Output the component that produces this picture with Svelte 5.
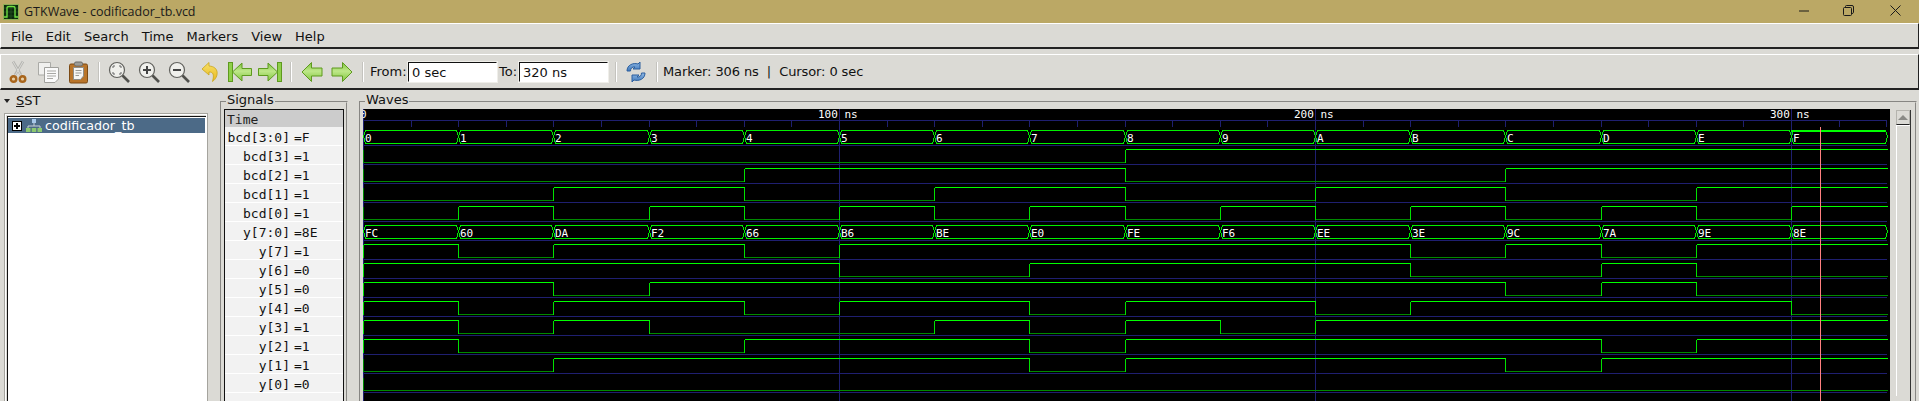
<script>
    const menus = ["File", "Edit", "Search", "Time", "Markers", "View", "Help"];
    const bcd = "0123456789ABCDEF".split("");
    const ys = ["FC", "60", "DA", "F2", "66", "B6", "BE", "E0", "FE", "F6", "EE", "3E", "9C", "7A", "9E", "8E"];

    const signals = [
        { name: "bcd[3:0]", value: "F" },
        { name: "bcd[3]", value: "1" },
        { name: "bcd[2]", value: "1" },
        { name: "bcd[1]", value: "1" },
        { name: "bcd[0]", value: "1" },
        { name: "y[7:0]", value: "8E" },
        { name: "y[7]", value: "1" },
        { name: "y[6]", value: "0" },
        { name: "y[5]", value: "0" },
        { name: "y[4]", value: "0" },
        { name: "y[3]", value: "1" },
        { name: "y[2]", value: "1" },
        { name: "y[1]", value: "1" },
        { name: "y[0]", value: "0" },
    ];

    const END = 1524;
    const tx = (i) => (i >= 16 ? END : Math.floor(95.2 * i + 0.4));
    // row n has its blue line at this y, inside the canvas
    const rowLine = (n) => 36 + 19 * n;

    function bits(list, bit) {
        return list.map((v) => (parseInt(v, 16) >> bit) & 1);
    }

    function digital(values, n) {
        const hi = rowLine(n) - 15 + 0.5;
        const lo = rowLine(n) - 2 + 0.5;
        const high = [];
        const low = [];
        const edges = [];
        values.forEach((v, i) => {
            const a = tx(i) + 0.5;
            const b = tx(i + 1) + 0.5;
            (v ? high : low).push(`M${a} ${v ? hi : lo}H${b}`);
            if (i > 0 && values[i - 1] !== v) edges.push(`M${a} ${hi}V${lo}`);
        });
        return {
            high: high.join(""),
            low: low.join(""),
            edges: edges.join(""),
            start: `M0.5 ${hi}V${lo}`,
            startColor: values[0] ? "#00e000" : "#008a00",
        };
    }

    function bus(labels, n) {
        const top = rowLine(n) - 15 + 0.5;
        const bot = rowLine(n) - 2 + 0.5;
        const mid = rowLine(n) - 8.5;
        let d = "";
        labels.forEach((_, i) => {
            const a = tx(i);
            const b = tx(i + 1);
            d += `M${a + 0.5} ${mid}L${a + 2.5} ${top}H${b - 1.5}L${b + 0.5} ${mid}L${b - 1.5} ${bot}H${a + 2.5}Z`;
        });
        return { d, top, texts: labels.map((t, i) => ({ t, x: tx(i) + 2, y: rowLine(n) - 3 })) };
    }

    const buses = [bus(bcd, 0), bus(ys, 5)];
    const wires = [];
    [3, 2, 1, 0].forEach((b, k) => wires.push(digital(bits(bcd, b), k + 1)));
    [7, 6, 5, 4, 3, 2, 1, 0].forEach((b, k) => wires.push(digital(bits(ys, b), k + 6)));

    const ticks = Array.from({ length: 33 }, (_, i) => Math.round(47.6 * i));
    const majors = [
        { x: 0, label: "0" },
        { x: 476, label: "100 ns" },
        { x: 952, label: "200 ns" },
        { x: 1428, label: "300 ns" },
    ];
</script>

<div class="window">
    <header class="titlebar">
        <svg class="appicon" width="16" height="16" viewBox="0 0 16 16">
            <rect x="0.5" y="0.5" width="15" height="15" fill="#0c2a0c" stroke="#8fae55" />
            <path d="M1 4H15M1 8H15M1 12H15M4 1V15M8 1V15M12 1V15" stroke="#2c5a2c" stroke-width="0.6" />
            <path d="M1 13H4V4Q4 2.5 6 2.5H10Q12 2.5 12 4V13H15" fill="none" stroke="#6fe040" stroke-width="1.3" />
        </svg>
        <span class="title">GTKWave - codificador_tb.vcd</span>
        <div class="controls">
            <svg class="min" width="11" height="2" viewBox="0 0 11 2"><path d="M0 1H10" stroke="#1a1a1a" /></svg>
            <svg width="11" height="11" viewBox="0 0 11 11" fill="none" stroke="#1a1a1a">
                <rect x="0.5" y="2.5" width="8" height="8" rx="1" />
                <path d="M2.5 2.5V1.5Q2.5 0.5 3.5 0.5H9Q10.5 0.5 10.5 2V7.5Q10.5 8.5 8.5 8.5" />
            </svg>
            <svg width="11" height="11" viewBox="0 0 11 11"><path d="M0.5 0.5L10.5 10.5M10.5 0.5L0.5 10.5" stroke="#1a1a1a" /></svg>
        </div>
    </header>

    <nav class="menubar">
        {#each menus as m}
            <span class="menu">{m}</span>
        {/each}
    </nav>

    <div class="toolbar">
        <svg class="defs" width="0" height="0">
            <defs>
                <linearGradient id="gloss" x1="0" y1="0" x2="0" y2="1">
                    <stop offset="0" stop-color="#7cc23a" />
                    <stop offset="0.45" stop-color="#bfe88a" />
                    <stop offset="1" stop-color="#7fc63c" />
                </linearGradient>
                <linearGradient id="sunny" x1="0" y1="0" x2="0" y2="1">
                    <stop offset="0" stop-color="#f7e06a" />
                    <stop offset="1" stop-color="#e8b81c" />
                </linearGradient>
                <linearGradient id="sky" x1="0" y1="0" x2="0" y2="1">
                    <stop offset="0" stop-color="#8fb8e4" />
                    <stop offset="1" stop-color="#3f78bb" />
                </linearGradient>
            </defs>
        </svg>
        <span class="tool">
            <svg width="24" height="24" viewBox="0 0 24 24">
                <path d="M7 1.5L15 15M17 1.5L9 15" stroke="#b4b4b0" stroke-width="2.6" fill="none" />
                <path d="M7 1.5L14.6 15M17 1.5L9.4 15" stroke="#e6e6e2" stroke-width="0.8" fill="none" />
                <circle cx="7.5" cy="19" r="2.8" fill="#e8d0a8" stroke="#a8651c" stroke-width="2.4" />
                <circle cx="16.5" cy="19" r="2.8" fill="#e8d0a8" stroke="#a8651c" stroke-width="2.4" />
            </svg>
        </span>
        <span class="tool">
            <svg width="24" height="24" viewBox="0 0 24 24">
                <path d="M2.5 2.5H14.5V15H2.5Z" fill="#f0f0ee" stroke="#aaaaa6" />
                <path d="M8.5 7.5H22.5V19L19 22.5H8.5Z" fill="#fafafa" stroke="#a0a09c" />
                <path d="M11 11H20M11 13.5H20M11 16H20M11 18.5H17" stroke="#a8a8a4" />
            </svg>
        </span>
        <span class="tool">
            <svg width="24" height="24" viewBox="0 0 24 24">
                <rect x="3.5" y="4" width="18" height="19" rx="1.5" fill="#b9752a" stroke="#7c4a14" />
                <path d="M7.5 7.5H17.5V16L14.5 19.5H7.5Z" fill="#f6f6f4" stroke="#8e8e8a" />
                <path d="M9.5 10.5H15.5M9.5 13H15.5M9.5 15.5H13" stroke="#9a9a96" />
                <rect x="8.5" y="2" width="8" height="4" rx="1.5" fill="#9c9c98" stroke="#6c6c68" />
            </svg>
        </span>
        <span class="sep"></span>
        <span class="tool">
            <svg width="24" height="24" viewBox="0 0 24 24">
                <circle cx="10" cy="10" r="7.5" fill="#f0f0ec" stroke="#62625e" stroke-width="1.2" />
                <path d="M15.5 15.5L22 22" stroke="#50504c" stroke-width="2.6" />
                <path d="M6 8V6H8M12 6H14V8M14 12V14H12M8 14H6V12" fill="none" stroke="#666" stroke-width="1" />
            </svg>
        </span>
        <span class="tool">
            <svg width="24" height="24" viewBox="0 0 24 24">
                <circle cx="10" cy="10" r="7.5" fill="#f0f0ec" stroke="#62625e" stroke-width="1.2" />
                <path d="M15.5 15.5L22 22" stroke="#50504c" stroke-width="2.6" />
                <path d="M6 10H14M10 6V14" stroke="#444" stroke-width="2" />
            </svg>
        </span>
        <span class="tool">
            <svg width="24" height="24" viewBox="0 0 24 24">
                <circle cx="10" cy="10" r="7.5" fill="#f0f0ec" stroke="#62625e" stroke-width="1.2" />
                <path d="M15.5 15.5L22 22" stroke="#50504c" stroke-width="2.6" />
                <path d="M6 10H14" stroke="#444" stroke-width="2" />
            </svg>
        </span>
        <span class="tool undo">
            <svg width="24" height="24" viewBox="0 0 24 24">
                <path d="M11 2.5L4 9L11 15V12C15 12 16.5 14 14.5 21.5C21 17 21.5 6.5 11 6Z" fill="url(#sunny)" stroke="#c9a418" stroke-width="0.8" />
            </svg>
        </span>
        <span class="tool">
            <svg width="26" height="24" viewBox="0 0 26 24">
                <rect x="1.5" y="2.5" width="4" height="19" fill="#8fd04a" stroke="#5e9a1e" />
                <path d="M5.5 12L15 3V8.5H24.5V15.5H15V21Z" fill="url(#gloss)" stroke="#5e9a1e" />
            </svg>
        </span>
        <span class="tool">
            <svg width="26" height="24" viewBox="0 0 26 24">
                <rect x="20.5" y="2.5" width="4" height="19" fill="#8fd04a" stroke="#5e9a1e" />
                <path d="M20.5 12L11 3V8.5H1.5V15.5H11V21Z" fill="url(#gloss)" stroke="#5e9a1e" />
            </svg>
        </span>
        <span class="sep last"></span>
        <span class="tool">
            <svg width="24" height="24" viewBox="0 0 24 24">
                <path d="M2 12L11.5 2.5V8H22V16H11.5V21.5Z" fill="url(#gloss)" stroke="#5e9a1e" />
            </svg>
        </span>
        <span class="tool">
            <svg width="24" height="24" viewBox="0 0 24 24">
                <path d="M22 12L12.5 2.5V8H2V16H12.5V21.5Z" fill="url(#gloss)" stroke="#5e9a1e" />
            </svg>
        </span>
        <span class="sep last"></span>
        <span class="from">From:</span>
        <span class="field">0 sec</span>
        <span class="to">To:</span>
        <span class="field">320 ns</span>
        <span class="sep after"></span>
        <span class="refresh">
            <svg width="22" height="22" viewBox="0 0 22 22">
                <path d="M2 10C2 4 8 1.5 13 3L15 1V8H8L10 6C7 5.5 5.5 7.5 5.5 10Z" fill="url(#sky)" stroke="#2c5f9e" />
                <path d="M20 12C20 18 14 20.5 9 19L7 21V14H14L12 16C15 16.5 16.5 14.5 16.5 12Z" fill="url(#sky)" stroke="#2c5f9e" />
            </svg>
        </span>
        <span class="sep"></span>
        <span class="status">Marker: 306 ns &nbsp;|&nbsp; Cursor: 0 sec</span>
    </div>

    <main class="panes">
        <section class="sst">
            <div class="sst-head">
                <span class="arrow"></span>
                <span><u>S</u>ST</span>
            </div>
            <div class="tree-frame">
                <div class="tree">
                    <div class="tree-row">
                        <span class="plus"></span>
                        <svg class="hier" width="16" height="13" viewBox="0 0 16 13">
                            <rect x="6" y="0" width="4" height="4" fill="#a8c8ea" />
                            <path d="M8 4V7M2 9V7H14V9" fill="none" stroke="#c8d0d8" />
                            <rect x="0" y="9" width="4.5" height="4" fill="#8cc870" />
                            <rect x="5.75" y="9" width="4.5" height="4" fill="#8cc870" />
                            <rect x="11.5" y="9" width="4.5" height="4" fill="#8cc870" />
                        </svg>
                        <span class="tree-label">codificador_tb</span>
                    </div>
                </div>
            </div>
        </section>

        <fieldset class="signals">
            <legend>Signals</legend>
            <div class="siglist">
                <div class="sig-time">Time</div>
                {#each signals as s}
                    <div class="sig">
                        <span class="sig-name">{s.name}</span>
                        <span class="sig-value">={s.value}</span>
                    </div>
                {/each}
            </div>
        </fieldset>

        <fieldset class="waves">
            <legend>Waves</legend>
            <div class="waves-body">
                <svg class="canvas" width="1527" height="292" viewBox="0 0 1527 292">
                    <rect width="1527" height="292" fill="#000" />
                    <g shape-rendering="crispEdges" stroke="#1f1f70" fill="none">
                        <path d="M0 11.5H1524" />
                        {#each ticks as t}
                            <path d={`M${t + 0.5} 11V18`} />
                        {/each}
                        {#each majors as m}
                            <path d={`M${m.x + 0.5} 0V292`} />
                        {/each}
                        {#each signals as _, n}
                            <path d={`M0 ${rowLine(n) + 0.5}H1524`} />
                        {/each}
                    </g>
                    {#each majors as m}
                        <text class="ruler" x={m.x === 0 ? -3 : m.x - 21} y="9">{m.label}</text>
                    {/each}
                    <g fill="none" shape-rendering="crispEdges">
                        {#each wires as w}
                            <path d={w.low} stroke="#008a00" />
                            <path d={w.high} stroke="#00ff00" />
                            <path d={w.edges} stroke="#00e000" />
                            <path d={w.start} stroke={w.startColor} />
                        {/each}
                    </g>
                    <g fill="none" stroke="#00f000" shape-rendering="crispEdges">
                        {#each buses as b}
                            <path d={b.d} />
                        {/each}
                    </g>
                    <path d={`M${tx(15)} 22H${END - 2}`} stroke="#00ff00" stroke-width="2" shape-rendering="crispEdges" />
                    {#each buses as b}
                        {#each b.texts as t}
                            <text class="value" x={t.x} y={t.y}>{t.t}</text>
                        {/each}
                    {/each}
                    <path d="M1457.5 18V292" stroke="#ff8080" shape-rendering="crispEdges" />
                </svg>
                <div class="scrollbar">
                    <div class="scroll-up"><span class="up-arrow"></span></div>
                    <div class="scroll-thumb"></div>
                </div>
            </div>
        </fieldset>
    </main>
</div>

<style>
    :global(body) {
        margin: 0;
        background: #dbdad5;
    }

    .window {
        width: 1919px;
        height: 401px;
        overflow: hidden;
        background: #dbdad5;
        font-family: "DejaVu Sans", sans-serif;
        font-size: 13px;
        color: #111;
    }

    .titlebar {
        height: 23px;
        background: #bba865;
        display: flex;
        align-items: center;
        padding-left: 3px;
        box-sizing: border-box;
    }

    .appicon {
        margin-right: 5px;
    }

    .title {
        font-family: "Open Sans", sans-serif;
        font-size: 12.5px;
        color: #1a1a1a;
    }

    .controls {
        margin-left: auto;
        display: flex;
        align-items: center;
        gap: 36px;
        padding: 0 18px 2px 0;
    }

    .min {
        margin-right: -3px;
    }

    .menubar {
        height: 26px;
        box-sizing: border-box;
        border-top: 1px solid #fff;
        border-left: 1px solid #fff;
        border-right: 1px solid #222;
        border-bottom: 2px solid #222;
        display: flex;
        align-items: center;
        padding: 1px 0 0 10px;
        gap: 13px;
        margin-bottom: 5px;
    }

    .toolbar {
        height: 36px;
        box-sizing: border-box;
        border-top: 1px solid #fff;
        border-left: 1px solid #fff;
        border-right: 1px solid #222;
        border-bottom: 2px solid #222;
        display: flex;
        align-items: center;
        padding-left: 2px;
    }

    .defs {
        position: absolute;
    }

    .tool {
        width: 30px;
        display: flex;
        justify-content: center;
    }

    .undo {
        margin-left: 1px;
    }

    .sep {
        width: 11px;
        height: 20px;
        background: linear-gradient(#c4c3be, #c4c3be) 5px 0 / 1px 100% no-repeat,
            linear-gradient(#fff, #fff) 6px 0 / 1px 100% no-repeat;
        flex: none;
    }

    .sep.last {
        width: 12px;
    }

    .from {
        margin-left: 1px;
        width: 38px;
    }

    .to {
        width: 20px;
        margin-left: 2px;
    }

    .field {
        width: 89px;
        height: 20px;
        box-sizing: border-box;
        background: #fff;
        border: 1px solid #fff;
        border-top-color: #111;
        border-left-color: #111;
        outline: 1px solid #efeee9;
        padding-left: 3px;
        font-size: 13px;
        line-height: 20px;
        color: #111;
    }

    .sep.after {
        margin-left: 2px;
    }

    .refresh {
        width: 30px;
        display: flex;
        justify-content: center;
    }

    .status {
        margin-left: 1px;
        white-space: nowrap;
        letter-spacing: -0.1px;
    }

    .panes {
        display: flex;
        align-items: flex-start;
        height: 311px;
    }

    .sst {
        width: 212px;
        flex: none;
        padding-left: 4px;
        box-sizing: border-box;
        margin-right: 4px;
    }

    .sst-head {
        display: flex;
        align-items: center;
        height: 21px;
        margin-bottom: 2px;
        box-sizing: border-box;
        gap: 6px;
        line-height: 16px;
    }

    .arrow {
        width: 0;
        height: 0;
        border-left: 3.5px solid transparent;
        border-right: 3.5px solid transparent;
        border-top: 4px solid #222;
    }

    .tree-frame {
        width: 204px;
        box-sizing: border-box;
        height: 290px;
        border: 1px solid #a5a49e;
        box-shadow: inset 0 0 0 1px #fff;
        padding: 2px 1px 0 2px;
    }

    .tree {
        background: #fff;
        height: 100%;
        border-left: 1px solid #111;
        border-top: 1px solid #111;
        box-sizing: border-box;
    }

    .tree-row {
        height: 15px;
        background: #4c6a87;
        display: flex;
        align-items: center;
        margin-right: 1px;
        margin-top: 1px;
    }

    .plus {
        width: 10px;
        height: 10px;
        box-sizing: border-box;
        margin-left: 4px;
        border: 1px solid #000;
        background: linear-gradient(#000, #000) center / 6px 2px no-repeat,
            linear-gradient(#000, #000) center / 2px 6px no-repeat,
            #fff;
    }

    .hier {
        margin-left: 4px;
    }

    .tree-label {
        color: #fff;
        margin-left: 3px;
        font-size: 12.7px;
    }

    fieldset {
        margin: 4px 0 0;
        min-width: 0;
        border: 2px groove #dbdad5;
        padding: 0 2px 2px;
        box-sizing: border-box;
        flex: none;
        height: 320px;
    }

    legend {
        padding: 0 1px;
        margin-left: 2px;
        height: 15px;
        line-height: 12px;
        font-size: 13px;
    }

    .signals {
        width: 128px;
        margin-left: 4px;
    }

    .waves {
        width: 1558px;
        margin-left: 11px;
    }

    .siglist {
        background: #f2f2f2;
        border: 1px solid #111;
        height: 320px;
        font-family: "DejaVu Sans Mono", monospace;
        font-size: 13px;
    }

    .sig-time {
        height: 17px;
        line-height: 19px;
        background: #cccccc;
        padding-left: 2px;
        color: #222;
    }

    .sig {
        height: 18px;
        line-height: 21px;
        border-bottom: 1px solid #fff;
        display: flex;
        color: #111;
    }

    .sig-name {
        width: 65px;
        text-align: right;
        white-space: nowrap;
        flex: none;
    }

    .sig-value {
        margin-left: 4px;
    }

    .waves-body {
        display: flex;
        align-items: flex-start;
    }

    .canvas {
        display: block;
        flex: none;
    }

    .ruler,
    .value {
        font-family: "DejaVu Sans Mono", monospace;
        font-size: 11px;
        fill: #fff;
    }

    .scrollbar {
        margin-left: 6px;
        width: 15px;
        flex: none;
        height: 292px;
        box-sizing: border-box;
        border-right: 1px solid #333;
        margin-top: 1px;
    }

    .scroll-up {
        height: 15px;
        box-sizing: border-box;
        border: 1px solid #b5b4ae;
        border-bottom: 1px solid #222;
        display: flex;
        align-items: center;
        justify-content: center;
    }

    .up-arrow {
        width: 0;
        height: 0;
        border-left: 5px solid transparent;
        border-right: 5px solid transparent;
        border-bottom: 5px solid #8a8a86;
    }

    .scroll-thumb {
        height: 270px;
        border-left: 1px solid #fff;
        border-top: 1px solid #fff;
    }
</style>
